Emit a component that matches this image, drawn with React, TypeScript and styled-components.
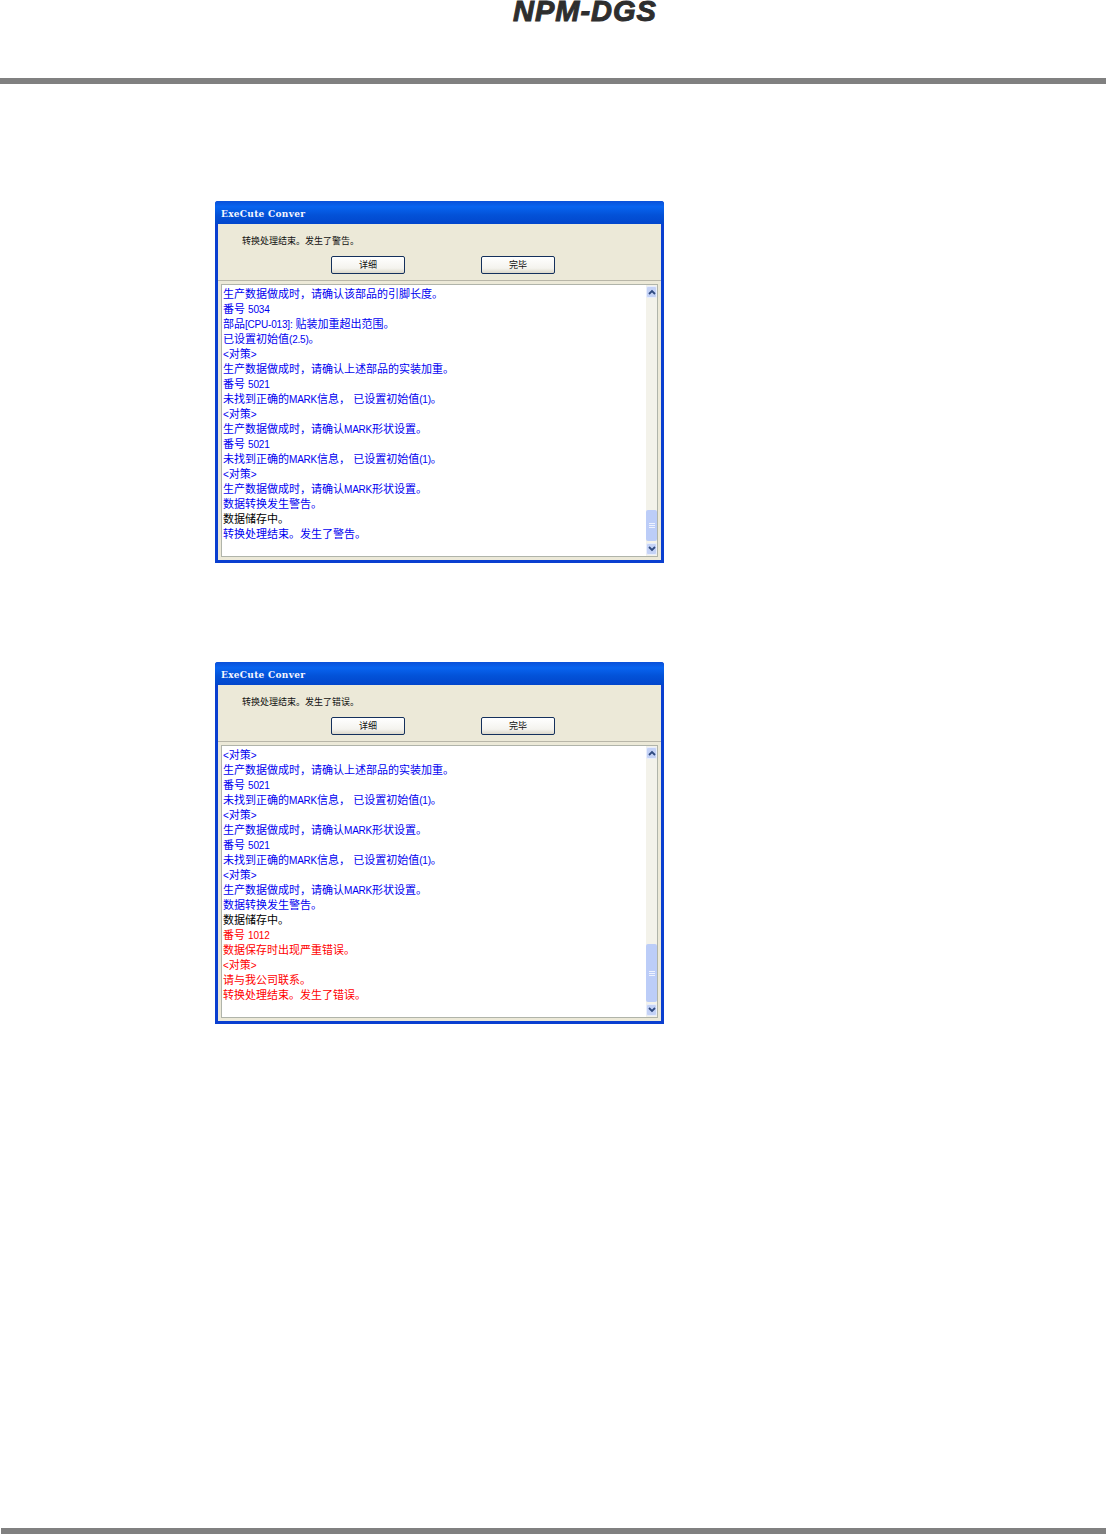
import { Fragment } from "react";
import { createGlobalStyle, styled } from "styled-components";

const GlobalStyle = createGlobalStyle`
	html, body {
		margin: 0;
		padding: 0;
		background: #ffffff;
	}
`;

type Tone = "blue" | "black" | "red";
type LogLine = [Tone, string];

const toneColors: Record<Tone, string> = {
	blue: "#0000f0",
	black: "#000000",
	red: "#ff0000",
};

const warningLog: LogLine[] = [
	["blue", "生产数据做成时，请确认该部品的引脚长度。"],
	["blue", "番号 5034"],
	["blue", "部品[CPU-013]: 贴装加重超出范围。"],
	["blue", "已设置初始值(2.5)。"],
	["blue", "<对策>"],
	["blue", "生产数据做成时，请确认上述部品的实装加重。"],
	["blue", "番号 5021"],
	["blue", "未找到正确的MARK信息， 已设置初始值(1)。"],
	["blue", "<对策>"],
	["blue", "生产数据做成时，请确认MARK形状设置。"],
	["blue", "番号 5021"],
	["blue", "未找到正确的MARK信息， 已设置初始值(1)。"],
	["blue", "<对策>"],
	["blue", "生产数据做成时，请确认MARK形状设置。"],
	["blue", "数据转换发生警告。"],
	["black", "数据储存中。"],
	["blue", "转换处理结束。发生了警告。"],
];

const errorLog: LogLine[] = [
	["blue", "<对策>"],
	["blue", "生产数据做成时，请确认上述部品的实装加重。"],
	["blue", "番号 5021"],
	["blue", "未找到正确的MARK信息， 已设置初始值(1)。"],
	["blue", "<对策>"],
	["blue", "生产数据做成时，请确认MARK形状设置。"],
	["blue", "番号 5021"],
	["blue", "未找到正确的MARK信息， 已设置初始值(1)。"],
	["blue", "<对策>"],
	["blue", "生产数据做成时，请确认MARK形状设置。"],
	["blue", "数据转换发生警告。"],
	["black", "数据储存中。"],
	["red", "番号 1012"],
	["red", "数据保存时出现严重错误。"],
	["red", "<对策>"],
	["red", "请与我公司联系。"],
	["red", "转换处理结束。发生了错误。"],
];

function LineText({ text }: { text: string }) {
	const parts = text.split(/([\x21-\x7e]+)/);
	return (
		<>
			{parts.map((part, i) =>
				i % 2 === 1 ? (
					<Latin key={i}>{part}</Latin>
				) : (
					<Fragment key={i}>{part}</Fragment>
				)
			)}
		</>
	);
}

function ScrollArrow({ up }: { up?: boolean }) {
	return (
		<svg width="8" height="6" viewBox="0 0 8 6">
			<path
				d={up ? "M1 5 L4 2 L7 5" : "M1 1 L4 4 L7 1"}
				fill="none"
				stroke="#2f4a80"
				strokeWidth="1.8"
			/>
		</svg>
	);
}

function ConvertDialog({
	message,
	lines,
	thumbHeight,
}: {
	message: string;
	lines: LogLine[];
	thumbHeight: number;
}) {
	return (
		<Dialog>
			<TitleBar>ExeCute Conver</TitleBar>
			<Body>
				<Message>{message}</Message>
				<ButtonRow>
					<DialogButton>详细</DialogButton>
					<DialogButton>完毕</DialogButton>
				</ButtonRow>
				<LogFrame>
					<LogText>
						{lines.map(([tone, text], i) => (
							<LogRow key={i} $tone={tone}>
								<LineText text={text} />
							</LogRow>
						))}
					</LogText>
					<ScrollBar>
						<ScrollButton>
							<ScrollArrow up />
						</ScrollButton>
						<ScrollThumb $height={thumbHeight}>
							<Grip />
							<Grip />
							<Grip />
						</ScrollThumb>
						<ScrollButton>
							<ScrollArrow />
						</ScrollButton>
					</ScrollBar>
				</LogFrame>
			</Body>
		</Dialog>
	);
}

export default function App() {
	return (
		<Page>
			<GlobalStyle />
			<Header>
				<Logo>NPM-DGS</Logo>
			</Header>
			<TopRule />
			<Content>
				<ConvertDialog
					message="转换处理结束。发生了警告。"
					lines={warningLog}
					thumbHeight={31}
				/>
				<ConvertDialog
					message="转换处理结束。发生了错误。"
					lines={errorLog}
					thumbHeight={58}
				/>
			</Content>
			<BottomRule />
		</Page>
	);
}

const Page = styled.div`
	display: flex;
	flex-direction: column;
	height: 1534px;
	overflow: hidden;
	background: #ffffff;
`;

const Header = styled.header`
	display: flex;
	justify-content: center;
	height: 78px;
	padding-left: 64px;
	box-sizing: border-box;
`;

const Logo = styled.div`
	font-family: "Liberation Sans", Arial, sans-serif;
	font-size: 29px;
	font-weight: 700;
	font-style: italic;
	letter-spacing: 1px;
	line-height: 22px;
	color: #2e2e2e;
	-webkit-text-stroke: 1px #2e2e2e;
`;

const TopRule = styled.div`
	height: 6px;
	background: #808080;
`;

const BottomRule = styled.div`
	height: 6px;
	margin-top: auto;
	margin-left: 1px;
	background: #808080;
`;

const Content = styled.main`
	display: flex;
	flex-direction: column;
	gap: 99px;
	padding: 117px 0 0 215px;
`;

const Dialog = styled.section`
	display: flex;
	flex-direction: column;
	box-sizing: border-box;
	width: 449px;
	height: 362px;
	border: 3px solid #0a3fd0;
	border-top: 0;
	border-radius: 3px 3px 0 0;
	background: #ece9d8;
`;

const TitleBar = styled.div`
	display: flex;
	align-items: center;
	flex: none;
	height: 23px;
	margin: 0 -3px;
	padding: 2px 0 0 6px;
	box-sizing: border-box;
	border-radius: 3px 3px 0 0;
	background: linear-gradient(180deg, #0a50d8 0%, #0864f0 25%, #0352d8 60%, #0246cc 100%);
	color: #f4f6ff;
	font-family: "DejaVu Serif", "Liberation Serif", serif;
	font-size: 9px;
	font-weight: 700;
	letter-spacing: 0.3px;
	white-space: nowrap;
`;

const Body = styled.div`
	display: flex;
	flex-direction: column;
	flex: 1;
	min-height: 0;
	font-family: "Liberation Sans", "Noto Sans CJK SC", sans-serif;
	font-size: 11px;
`;

const Message = styled.div`
	height: 32px;
	padding: 11px 0 0 24px;
	box-sizing: border-box;
	font-size: 9px;
	line-height: 13px;
	color: #111111;
`;

const ButtonRow = styled.div`
	display: flex;
	gap: 76px;
	height: 25px;
	padding-left: 113px;
	box-sizing: border-box;
	border-bottom: 1px solid #b8b6a8;
`;

const DialogButton = styled.button`
	width: 74px;
	height: 18px;
	padding: 0;
	border: 1px solid #14305c;
	border-radius: 2px;
	background: linear-gradient(180deg, #ffffff 0%, #f4f3ee 70%, #dcd8ca 100%);
	color: #111111;
	font-family: inherit;
	font-size: 9px;
	line-height: 14px;
`;

const LogFrame = styled.div`
	display: flex;
	flex: 1;
	min-height: 0;
	margin: 3px;
	border: 1px solid #b0b4aa;
	background: #ffffff;
`;

const LogText = styled.div`
	flex: 1;
	padding: 2px 0 0 1px;
	overflow: hidden;
`;

const LogRow = styled.div<{ $tone: Tone }>`
	height: 15px;
	line-height: 15px;
	white-space: pre;
	color: ${(p) => toneColors[p.$tone]};
`;

const Latin = styled.span`
	font-size: 10px;
	letter-spacing: -0.2px;
`;

const ScrollBar = styled.div`
	display: flex;
	flex-direction: column;
	flex: none;
	width: 11px;
	padding: 1px 0;
	box-sizing: border-box;
	background: #f3f2ea;
`;

const ScrollButton = styled.div`
	display: flex;
	align-items: center;
	justify-content: center;
	flex: none;
	height: 12px;
	border: 1px solid #e8eefc;
	border-radius: 2px;
	box-sizing: border-box;
	background: #c4d2f6;
`;

const ScrollThumb = styled.div<{ $height: number }>`
	display: flex;
	flex-direction: column;
	align-items: center;
	justify-content: center;
	gap: 1px;
	flex: none;
	height: ${(p) => p.$height}px;
	margin-top: auto;
	margin-bottom: 2px;
	border-radius: 2px;
	background: #bccdf8;
`;

const Grip = styled.span`
	width: 6px;
	height: 1px;
	background: #eef2fe;
`;
